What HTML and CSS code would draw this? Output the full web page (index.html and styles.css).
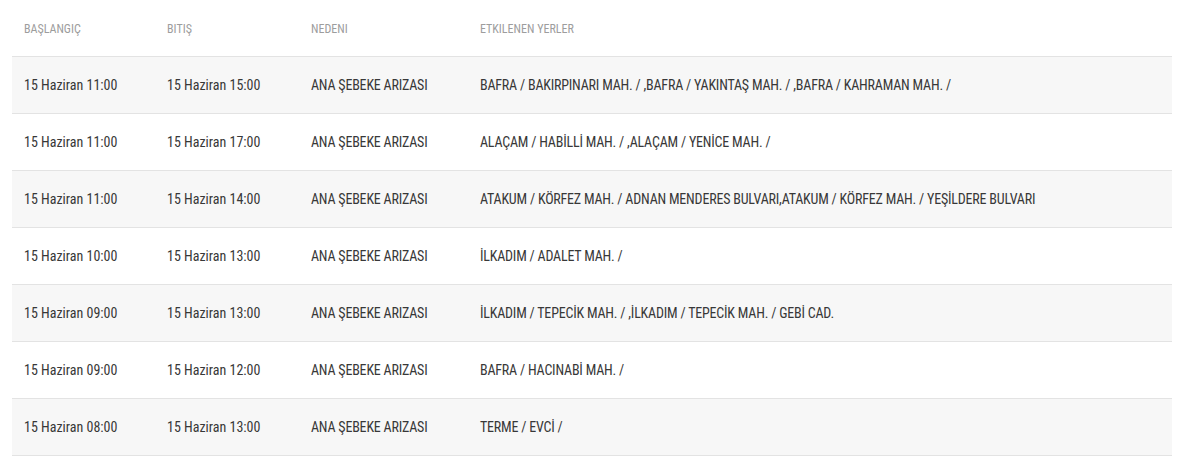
FILE: index.html
```html
<!DOCTYPE html>
<html lang="tr">
<head>
<meta charset="utf-8">
<title>Planlı Kesintiler</title>
<link rel="stylesheet" href="styles.css">
</head>
<body>
<div class="wrap">
<table class="outages">
<colgroup>
<col class="c1"><col class="c2"><col class="c3"><col class="c4">
</colgroup>
<thead>
<tr><th>BAŞLANGIÇ</th><th>BITIŞ</th><th>NEDENI</th><th>ETKILENEN YERLER</th></tr>
</thead>
<tbody>
<tr><td>15 Haziran 11:00</td><td>15 Haziran 15:00</td><td class="cause">ANA ŞEBEKE ARIZASI</td><td class="places">BAFRA / BAKIRPINARI MAH. / ,BAFRA / YAKINTAŞ MAH. / ,BAFRA / KAHRAMAN MAH. /</td></tr>
<tr><td>15 Haziran 11:00</td><td>15 Haziran 17:00</td><td class="cause">ANA ŞEBEKE ARIZASI</td><td class="places">ALAÇAM / HABİLLİ MAH. / ,ALAÇAM / YENİCE MAH. /</td></tr>
<tr><td>15 Haziran 11:00</td><td>15 Haziran 14:00</td><td class="cause">ANA ŞEBEKE ARIZASI</td><td class="places">ATAKUM / KÖRFEZ MAH. / ADNAN MENDERES BULVARI,ATAKUM / KÖRFEZ MAH. / YEŞİLDERE BULVARI</td></tr>
<tr><td>15 Haziran 10:00</td><td>15 Haziran 13:00</td><td class="cause">ANA ŞEBEKE ARIZASI</td><td class="places">İLKADIM / ADALET MAH. /</td></tr>
<tr><td>15 Haziran 09:00</td><td>15 Haziran 13:00</td><td class="cause">ANA ŞEBEKE ARIZASI</td><td class="places">İLKADIM / TEPECİK MAH. / ,İLKADIM / TEPECİK MAH. / GEBİ CAD.</td></tr>
<tr><td>15 Haziran 09:00</td><td>15 Haziran 12:00</td><td class="cause">ANA ŞEBEKE ARIZASI</td><td class="places">BAFRA / HACINABİ MAH. /</td></tr>
<tr><td>15 Haziran 08:00</td><td>15 Haziran 13:00</td><td class="cause">ANA ŞEBEKE ARIZASI</td><td class="places">TERME / EVCİ /</td></tr>
</tbody>
</table>
</div>
</body>
</html>
```
FILE: styles.css
```css
html, body {
  margin: 0;
  padding: 0;
  background: #ffffff;
}
.wrap {
  padding: 0 6px 0 12px;
}
.outages {
  width: 1160px;
  border-collapse: collapse;
  table-layout: fixed;
  font-family: "Roboto Condensed", "DejaVu Sans Condensed", "Liberation Sans", sans-serif;
  color: #383838;
}
.c1 { width: 143px; }
.c2 { width: 144px; }
.c3 { width: 169px; }
.outages th {
  height: 56px;
  padding: 2px 12px 0;
  box-sizing: border-box;
  text-align: left;
  font-weight: normal;
  font-size: 12px;
  color: #9d9d9d;
  border-bottom: 1px solid #e3e3e3;
  vertical-align: middle;
}
.outages td {
  height: 57px;
  box-sizing: border-box;
  padding: 0 12px;
  font-size: 14px;
  border-bottom: 1px solid #e3e3e3;
  vertical-align: middle;
  white-space: nowrap;
}
.outages td.cause {
  letter-spacing: -0.2px;
}
.outages td.places {
  letter-spacing: -0.2px;
}
.outages tbody tr:nth-child(odd) {
  background: #f7f7f7;
}
```
